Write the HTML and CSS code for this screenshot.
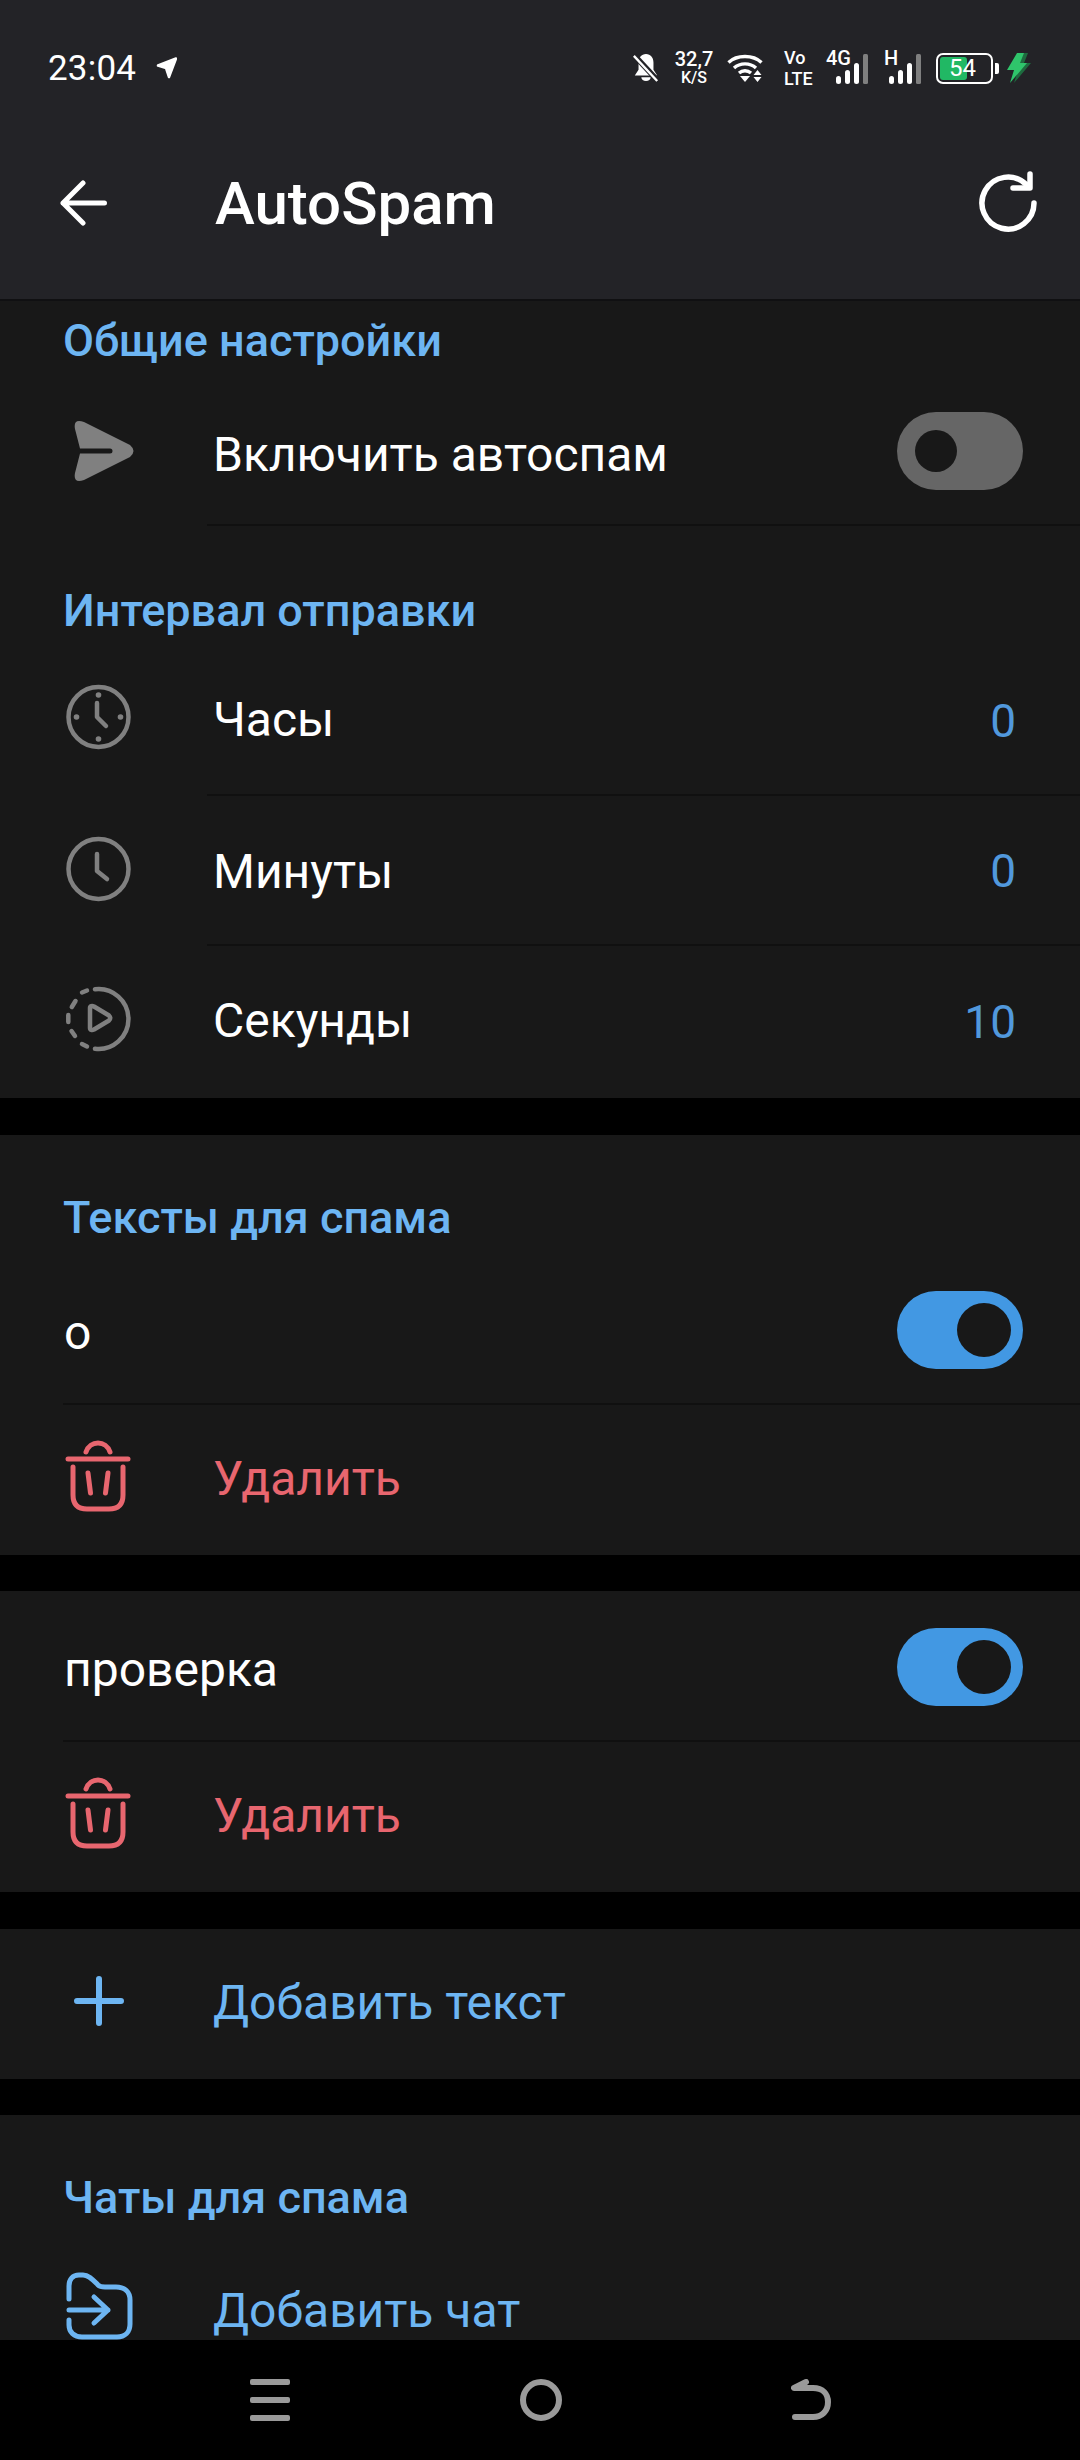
FILE: index.html
```html
<!DOCTYPE html>
<html>
<head>
  <title>AutoSpam</title>
  <link rel="stylesheet" href="styles.css">
</head>
<body>
  <div class="tela">
    <div class="topo">
      <div class="status">
        <span class="hora">23:04</span>
        <svg class="seta-local" viewBox="0 0 22 24"><path d="M3 9.500 21 2.500 14 21 11 12Z" fill="#fff" stroke="#fff" stroke-width="2.500" stroke-linejoin="round"/></svg>
        <div class="status-dir">
          <svg class="sino" viewBox="0 0 30 32"><path d="M15 1c-5 0-8 4-8 9v8l-4 6h24l-4-6v-8c0-5-3-9-8-9z" fill="#fff"/><path d="M10 26a5 4 0 0 0 10 0z" fill="#fff"/><path d="M2 2 28 30" stroke="#232327" stroke-width="6"/><path d="M2 3 27 30" stroke="#fff" stroke-width="2.500"/></svg>
          <div class="duas-linhas vel"><span>32,7</span><span class="menor">K/S</span></div>
          <svg class="wifi" viewBox="0 0 36 30"><g fill="none" stroke="#fff" stroke-width="3.400"><path d="M1.500 9.500C10 1.500 26 1.500 34.500 9.500"/><path d="M7 15C13 9.500 23 9.500 29 15"/><path d="M12 20C15.500 17 20.500 17 24 20"/></g><path d="M13 23h10l-5 6z" fill="#fff"/><path d="M26.500 22 30.500 17 34.500 22zM26.500 24H34.500L30.500 29z" fill="#fff"/></svg>
          <div class="duas-linhas volte"><span>Vo</span><span>LTE</span></div>
          <div class="sinal sinal-4g">
            <span class="rede">4G</span>
            <svg viewBox="0 0 32 30"><g fill="#fff"><rect x="0" y="22" width="5" height="8" rx="2.500"/><rect x="9" y="16" width="5" height="14" rx="2.500"/><rect x="18" y="9" width="5" height="21" rx="2.500"/></g><rect x="27" y="0" width="5" height="30" rx="1.500" fill="#7f7f7f"/></svg>
          </div>
          <div class="sinal sinal-h">
            <span class="rede">H</span>
            <svg viewBox="0 0 32 30"><g fill="#fff"><rect x="0" y="22" width="5" height="8" rx="2.500"/><rect x="9" y="16" width="5" height="14" rx="2.500"/><rect x="18" y="9" width="5" height="21" rx="2.500"/></g><rect x="27" y="0" width="5" height="30" rx="1.500" fill="#7f7f7f"/></svg>
          </div>
          <div class="bateria">
            <div class="carga"></div>
            <span class="nivel">54</span>
          </div>
          <div class="bateria-ponta"></div>
          <svg class="raio" viewBox="0 0 28 32"><path d="M17 1h7L20 11h7L10 31l4-13H8z" fill="#1e6b3f"/><path d="M13 1h7l-4 10h7L6 31l4-13H3z" fill="#2fc56b"/></svg>
        </div>
      </div>
      <div class="barra">
        <svg class="voltar" viewBox="0 0 48 48"><path d="M3 24H44.500M23 4 3 24 23 44" fill="none" stroke="#fff" stroke-width="5" stroke-linecap="round" stroke-linejoin="round"/></svg>
        <h1>AutoSpam</h1>
        <svg class="atualizar" viewBox="0 0 64 64"><path d="M60 32A26 26 0 1 1 52 13.300" fill="none" stroke="#fff" stroke-width="5.500" stroke-linecap="round"/><path d="M56 3V17H39" fill="none" stroke="#fff" stroke-width="5.500" stroke-linecap="round" stroke-linejoin="round"/></svg>
      </div>
    </div>

    <div class="conteudo">
      <div class="secao">
        <h2 class="titulo-secao titulo-topo">Общие настройки</h2>
        <div class="linha linha-divisor">
          <svg class="icone icone-envio" viewBox="0 0 70 66"><path d="M20 4 66 27Q73 33 66 39L20 62Q9 66 11 55L16 35.500H46a2.500 2.500 0 0 0 0-5H16L11 11Q9 0 20 4Z" fill="#808080"/></svg>
          <span class="rotulo rotulo-baixo">Включить автоспам</span>
          <div class="chave"><div class="bolinha"></div></div>
        </div>
        <h2 class="titulo-secao titulo-meio">Интервал отправки</h2>
        <div class="linha linha-divisor">
          <svg class="icone" viewBox="0 0 70 66"><g fill="none" stroke="#808080" stroke-width="4.500" stroke-linecap="round" stroke-linejoin="round"><circle cx="34.500" cy="33" r="30"/><path d="M33 19V33L42 42"/></g><g fill="#808080"><circle cx="34.500" cy="11" r="2.800"/><circle cx="34.500" cy="55" r="2.800"/><circle cx="12.500" cy="33" r="2.800"/><circle cx="56.500" cy="33" r="2.800"/></g></svg>
          <span class="rotulo rotulo-alto">Часы</span>
          <span class="valor">0</span>
        </div>
        <div class="linha linha-divisor">
          <svg class="icone icone-minutos" viewBox="0 0 70 66"><g fill="none" stroke="#808080" stroke-width="4.500" stroke-linecap="round" stroke-linejoin="round"><circle cx="34.500" cy="33" r="30"/><path d="M33 18V35L43 43"/></g></svg>
          <span class="rotulo">Минуты</span>
          <span class="valor">0</span>
        </div>
        <div class="linha linha-final">
          <svg class="icone icone-segundos" viewBox="0 0 70 66"><g fill="none" stroke="#808080" stroke-width="4.500" stroke-linecap="round" stroke-linejoin="round"><path d="M31 3.200A30 30 0 1 1 31 62.800"/><path d="M18 58 23 60.500"/><path d="M7.500 45 11 50"/><path d="M4.300 29V36"/><path d="M7.800 21 11.500 15"/><path d="M18 6.500 23 4.500"/><path d="M26 22C26 20 28 19.500 30 20.500L45 29.500Q47.500 32 45 34.500L30 43.500C28 44.500 26 44 26 42Z"/></g></svg>
          <span class="rotulo rotulo-alto">Секунды</span>
          <span class="valor">10</span>
        </div>
      </div>

      <div class="secao">
        <h2 class="titulo-secao titulo-texto">Тексты для спама</h2>
        <div class="linha linha-divisor-larga">
          <span class="rotulo rotulo-baixo">о</span>
          <div class="chave ligada"><div class="bolinha"></div></div>
        </div>
        <div class="linha">
          <svg class="icone icone-lixo" viewBox="0 0 70 72"><g fill="none" stroke="#e8666f" stroke-width="5" stroke-linecap="round" stroke-linejoin="round"><path d="M4 19H64"/><path d="M22 12C26 0 42 0 46 12"/><path d="M9 27V55C9 65 14 69 23 69H45C54 69 59 65 59 55V27"/><path d="M24 33 26.500 53M44 33 41.500 53"/></g></svg>
          <span class="rotulo rotulo-alto vermelho">Удалить</span>
        </div>
      </div>

      <div class="secao">
        <div class="linha linha-alta linha-divisor-larga">
          <span class="rotulo rotulo-baixo">проверка</span>
          <div class="chave ligada"><div class="bolinha"></div></div>
        </div>
        <div class="linha">
          <svg class="icone icone-lixo" viewBox="0 0 70 72"><g fill="none" stroke="#e8666f" stroke-width="5" stroke-linecap="round" stroke-linejoin="round"><path d="M4 19H64"/><path d="M22 12C26 0 42 0 46 12"/><path d="M9 27V55C9 65 14 69 23 69H45C54 69 59 65 59 55V27"/><path d="M24 33 26.500 53M44 33 41.500 53"/></g></svg>
          <span class="rotulo rotulo-alto vermelho">Удалить</span>
        </div>
      </div>

      <div class="secao">
        <div class="linha">
          <svg class="icone" viewBox="0 0 70 66"><path d="M35 12V56M13 34H57" fill="none" stroke="#6db5f2" stroke-width="6" stroke-linecap="round"/></svg>
          <span class="rotulo rotulo-alto azul">Добавить текст</span>
        </div>
      </div>

      <div class="secao ultima">
        <h2 class="titulo-secao titulo-texto">Чаты для спама</h2>
        <div class="linha">
          <svg class="icone icone-pasta" viewBox="0 0 70 68"><g fill="none" stroke="#6db5f2" stroke-width="5" stroke-linecap="round" stroke-linejoin="round"><path d="M5 27V14C5 7 9 3 15 3H19C25 3 29 8 34 13C36 15 38 15 41 15H52C61 15 66 20 66 28V52C66 60 61 65 53 65H18C10 65 5 60 5 53V48"/><path d="M5 38H44M30 25 44 38 30 51"/></g></svg>
          <span class="rotulo azul">Добавить чат</span>
        </div>
      </div>
    </div>

    <div class="nav">
      <svg class="nav-menu" viewBox="0 0 40 42"><g fill="#9a9a9a"><rect width="40" height="6" rx="2"/><rect y="18" width="40" height="6" rx="2"/><rect y="36" width="40" height="6" rx="2"/></g></svg>
      <div class="nav-home"></div>
      <svg class="nav-voltar" viewBox="0 0 40 42"><path d="M15 3 3 9H22C32 9 37 15 37 23C37 32 31 38 22 38H4" fill="none" stroke="#9a9a9a" stroke-width="6" stroke-linecap="round" stroke-linejoin="round"/></svg>
    </div>
  </div>
</body>
</html>
```

FILE: styles.css
```css
* {
  box-sizing: border-box;
}

body {
  margin: 0;
  background-color: #000;
  color: #fff;
  font-family: Roboto, "Liberation Sans", sans-serif;
}

.tela {
  width: 1080px;
  height: 2460px;
  display: flex;
  flex-direction: column;
  overflow: hidden;
}

/* Topo */
.topo {
  height: 301px;
  flex-shrink: 0;
  background-color: #232327;
  border-bottom: 2px solid #101012;
}

.status {
  height: 130px;
  display: flex;
  align-items: center;
  padding: 0 48px 0 48px;
  margin-top: 3px;
}

.hora {
  font-size: 35px;
  letter-spacing: 0.2px;
}

.seta-local {
  width: 22px;
  height: 24px;
  margin-left: 19px;
}

.status-dir {
  margin-left: auto;
  display: flex;
  align-items: center;
}

.sino {
  width: 28px;
  height: 32px;
}

.duas-linhas {
  display: flex;
  flex-direction: column;
  align-items: center;
  font-weight: 500;
  line-height: 19px;
}

.vel {
  font-size: 20px;
  margin-left: 15px;
  width: 38px;
}

.vel .menor {
  font-size: 16px;
  line-height: 17px;
}

.wifi {
  width: 36px;
  height: 30px;
  margin-left: 14px;
}

.volte {
  font-size: 18px;
  align-items: flex-start;
  margin-left: 21px;
  width: 29px;
  line-height: 21px;
}

.sinal {
  position: relative;
  height: 32px;
  width: 32px;
}

.sinal svg {
  display: block;
  width: 32px;
  height: 30px;
  margin-top: 2px;
}

.sinal-4g {
  margin-left: 23px;
}

.sinal-h {
  margin-left: 21px;
}

.rede {
  position: absolute;
  top: -6px;
  font-size: 20px;
  font-weight: 500;
}

.sinal-4g .rede {
  left: -10px;
}

.sinal-h .rede {
  left: -5px;
}

.bateria {
  position: relative;
  width: 57px;
  height: 31px;
  margin-left: 15px;
  border: 2px solid #fff;
  border-radius: 7px;
  padding: 2px;
}

.carga {
  width: 27px;
  height: 100%;
  background-color: #21b864;
  border-radius: 3px;
}

.nivel {
  position: absolute;
  top: 0;
  left: 11px;
  font-size: 24px;
  line-height: 27px;
}

.bateria-ponta {
  width: 4px;
  height: 11px;
  margin-left: 2px;
  background-color: #fff;
  border-radius: 0 2px 2px 0;
}

.raio {
  width: 28px;
  height: 32px;
  margin-left: 5px;
}

.barra {
  height: 120px;
  margin-top: 10px;
  display: flex;
  align-items: center;
  padding: 0 42px 0 60px;
}

.voltar {
  width: 48px;
  height: 48px;
}

.barra h1 {
  margin: 0 0 0 107px;
  font-size: 60px;
  font-weight: 500;
}

.atualizar {
  width: 64px;
  height: 64px;
  margin-left: auto;
}

/* Conteudo */
.conteudo {
  flex: 1;
  overflow: hidden;
  display: flex;
  flex-direction: column;
  gap: 36.5px;
}

.secao {
  background-color: #181818;
  flex-shrink: 0;
}

.ultima {
  flex: 1;
}

.titulo-secao {
  margin: 0;
  padding-left: 63px;
  font-size: 45px;
  font-weight: 500;
  color: #6db5f2;
  line-height: 50px;
}

.titulo-topo {
  padding-top: 15px;
  height: 75px;
}

.titulo-meio {
  padding-top: 60px;
  height: 120px;
}

.titulo-texto {
  padding-top: 58px;
  height: 120px;
}

.linha {
  position: relative;
  height: 150px;
  display: flex;
  align-items: center;
  padding: 0 57px 0 64px;
}

.linha-alta {
  height: 151px;
}

.linha-final {
  height: 152px;
}

.linha-divisor::after,
.linha-divisor-larga::after {
  content: "";
  position: absolute;
  left: 207px;
  right: 0;
  bottom: 0;
  height: 2px;
  background-color: #101010;
}

.linha-divisor-larga::after {
  left: 63px;
}

.icone {
  width: 70px;
  height: 66px;
  flex-shrink: 0;
  margin-right: 79px;
  margin-bottom: 8px;
}

.icone-envio {
  margin-bottom: 0;
}

.icone-minutos {
  margin-bottom: 4px;
}

.icone-segundos {
  margin-bottom: 6px;
}

.icone-lixo {
  height: 72px;
}

.icone-pasta {
  height: 68px;
}

.rotulo {
  font-size: 48px;
  color: #fff;
}

.rotulo-baixo {
  margin-top: 6px;
}

.rotulo-alto {
  margin-bottom: 3px;
}

.vermelho {
  color: #e8666f;
}

.azul {
  color: #6db5f2;
}

.valor {
  margin-left: auto;
  margin-right: 7px;
  font-size: 46px;
  color: #5198dc;
}

.chave {
  margin-left: auto;
  width: 126px;
  height: 78px;
  border-radius: 39px;
  background-color: #666;
  padding: 18px;
  display: flex;
}

.chave.ligada {
  background-color: #4298e3;
  justify-content: flex-end;
  padding: 12px;
}

.bolinha {
  width: 42px;
  height: 42px;
  border-radius: 50%;
  background-color: #181818;
}

.ligada .bolinha {
  width: 54px;
  height: 54px;
}

/* Navegacao */
.nav {
  height: 120px;
  flex-shrink: 0;
  background-color: #000;
  display: flex;
  align-items: center;
  justify-content: space-between;
  padding: 0 249px 0 250px;
}

.nav-menu,
.nav-voltar {
  width: 40px;
  height: 42px;
}

.nav-home {
  width: 42px;
  height: 42px;
  border: 6px solid #9a9a9a;
  border-radius: 50%;
}
```
